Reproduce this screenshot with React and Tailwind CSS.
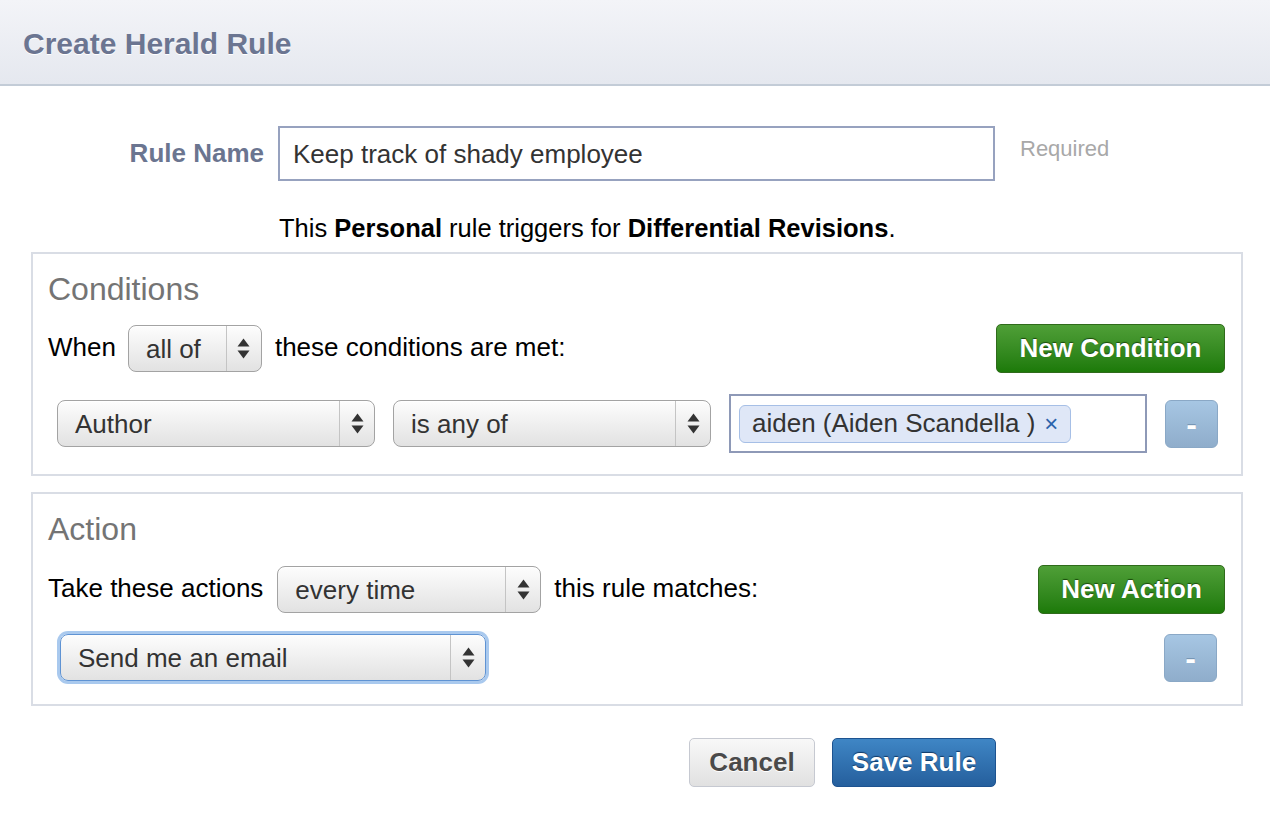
import React from "react";

function Arrows() {
  return (
    <svg width="13" height="21" viewBox="0 0 13 21">
      <path d="M0.5 8.5 L6.5 0.5 L12.5 8.5 Z" fill="#333" />
      <path d="M0.5 12.5 L12.5 12.5 L6.5 20.5 Z" fill="#333" />
    </svg>
  );
}

function Select({ label, width, focused }) {
  return (
    <div
      className={`flex h-[47px] shrink-0 items-stretch rounded-[8px] border-[1.5px] bg-linear-to-b from-[#fdfdfd] to-[#e2e2e2] ${
        focused
          ? "border-[#5f93d3] shadow-[0_0_0_3px_#a9c9ee]"
          : "border-[#a3a3a3] shadow-[inset_0_1px_0_#ffffff]"
      }`}
      style={{ width }}
    >
      <div className="flex flex-1 items-center pl-[17px] pt-[1px] text-[26px] text-[#333]">{label}</div>
      <div className="flex w-[35px] items-center justify-center border-l border-[#c4c4c4]">
        <Arrows />
      </div>
    </div>
  );
}

function MinusButton() {
  return (
    <button className="flex h-[48px] w-[53px] shrink-0 items-center justify-center rounded-[6px] border border-[#8aa8c6] bg-linear-to-b from-[#a6c6e3] to-[#8fadcb] text-[32px] font-bold leading-none text-white [text-shadow:0_-1px_0_#6f8fae]">
      -
    </button>
  );
}

function GreenButton({ children, width }) {
  return (
    <button
      className="flex h-[49px] shrink-0 items-center justify-center rounded-[5px] border border-[#2f6b1b] bg-linear-to-b from-[#4f9f37] to-[#1c7a08] text-[26px] font-bold text-white [text-shadow:0_-1px_1px_#1b4a0c]"
      style={{ width }}
    >
      {children}
    </button>
  );
}

export default function App() {
  return (
    <div className="min-h-screen w-[1270px] bg-white font-['Liberation_Sans',Arial,sans-serif]">
      <div className="h-[86px] border-b-2 border-[#c3ccd7] bg-linear-to-b from-[#f3f4f8] to-[#e5e8ef] pl-[23px] pt-[29px]">
        <h1 className="text-[30px] font-bold leading-[30px] text-[#6b7591] [text-shadow:0_1px_0_#ffffff]">
          Create Herald Rule
        </h1>
      </div>

      <div className="mt-[40px] flex items-center">
        <div className="w-[264px] text-right text-[26px] font-bold text-[#6b7590]">Rule Name</div>
        <div className="ml-[14px] flex h-[55px] w-[717px] items-center border-2 border-[#97a2bf] pl-[13px] pt-[2px] text-[26px] text-[#333]">
          Keep track of shady employee
        </div>
        <div className="ml-[25px] -mt-[10px] text-[22px] text-[#a8a8a8]">Required</div>
      </div>

      <p className="mt-[32px] pl-[279px] text-[25.5px] leading-[30px] text-black">
        This <b>Personal</b> rule triggers for <b>Differential Revisions</b>.
      </p>

      <section className="ml-[31px] mt-[9px] w-[1212px] border-2 border-[#d9dde5] pb-[21px] pl-[15px] pr-[16px] pt-[17px]">
        <h2 className="text-[32px] leading-[36px] text-[#747474]">Conditions</h2>
        <div className="mt-[17px] flex h-[49px] items-center">
          <span className="-mt-[3px] text-[26px] text-black">When</span>
          <div className="ml-[12px]">
            <Select label="all of" width={134} />
          </div>
          <span className="-mt-[3px] ml-[13px] text-[26px] text-black">these conditions are met:</span>
          <div className="ml-auto">
            <GreenButton width={229}>New Condition</GreenButton>
          </div>
        </div>
        <div className="ml-[9px] mr-[8px] mt-[21px] flex h-[59px] items-center gap-[18px]">
          <Select label="Author" width={318} />
          <Select label="is any of" width={318} />
          <div className="flex h-[59px] w-[418px] shrink-0 items-center border-2 border-[#8e99b7] pl-[8px]">
            <div className="flex h-[38px] items-center rounded-[6px] border-[1.5px] border-[#a6bfe6] bg-[#dfe7f7] pl-[12px] pr-[12px] text-[26px] text-[#333]">
              aiden (Aiden Scandella )
              <span className="ml-[9px] text-[24px] text-[#2d63ab]">×</span>
            </div>
          </div>
          <div className="ml-auto">
            <MinusButton />
          </div>
        </div>
      </section>

      <section className="ml-[31px] mt-[16px] w-[1212px] border-2 border-[#d9dde5] pb-[19px] pl-[15px] pr-[16px] pt-[17px]">
        <h2 className="text-[32px] leading-[36px] text-[#747474]">Action</h2>
        <div className="mt-[18px] flex h-[49px] items-center">
          <span className="-mt-[3px] text-[26px] text-black">Take these actions</span>
          <div className="ml-[14px]">
            <Select label="every time" width={264} />
          </div>
          <span className="-mt-[3px] ml-[13px] text-[26px] text-black">this rule matches:</span>
          <div className="ml-auto">
            <GreenButton width={187}>New Action</GreenButton>
          </div>
        </div>
        <div className="ml-[12px] mr-[8px] mt-[16px] flex h-[55px] items-center">
          <Select label="Send me an email" width={426} focused />
          <div className="ml-auto">
            <MinusButton />
          </div>
        </div>
      </section>

      <div className="mt-[32px] flex w-[996px] justify-end gap-[17px]">
        <button className="h-[49px] w-[126px] rounded-[5px] border-[1.5px] border-[#c6c9d1] bg-linear-to-b from-[#f8f8f8] to-[#e1e1e1] text-[26px] font-bold text-[#4a4a4a] [text-shadow:0_1px_0_#ffffff]">
          Cancel
        </button>
        <button className="h-[49px] w-[164px] rounded-[5px] border border-[#1d5390] bg-linear-to-b from-[#3f86c5] to-[#255f9d] text-[26px] font-bold text-white [text-shadow:0_-1px_1px_#123a66]">
          Save Rule
        </button>
      </div>
    </div>
  );
}
